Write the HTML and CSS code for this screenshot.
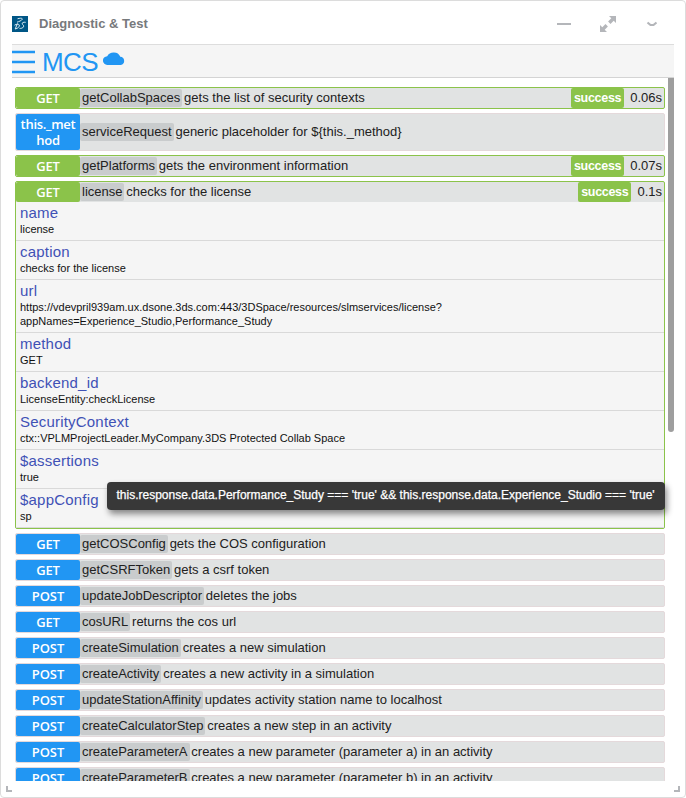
FILE: index.html
```html
<!DOCTYPE html>
<html lang="en">
<head>
<meta charset="utf-8">
<title>Diagnostic &amp; Test</title>
<link rel="stylesheet" href="styles.css">
</head>
<body>
<div class="widget">
  <header class="titlebar">
    <svg class="logo" viewBox="0 0 16 16"><rect width="16" height="16" fill="#005686"/><g fill="none" stroke="#dcebf3" stroke-width="1"><path d="M5.500 2.800C8 2 10.800 2 10.200 3.300C9.600 4.600 7 5.500 5 6.200"/><path d="M5.500 7.500L3.200 13C6 12.500 7.800 10.500 7.300 9C6.800 7.700 4.500 8 2.500 9.200"/><path d="M13.700 6.300C11.500 5.900 9.700 6.700 10.200 8C10.700 9 12.300 9.300 11.500 10.900C10.700 12.300 9 12.500 7.500 12.300"/></g></svg>
    <h1 class="title">Diagnostic &amp; Test</h1>
    <svg class="controls" viewBox="0 0 104 20"><g fill="#b4b6ba"><rect x="0" y="9" width="14" height="2"/><path d="M52 2h7v7l-2.300-2.300l-3.200 3.200l-2.400-2.400l3.200-3.200z"/><path d="M50 18h-7v-7l2.300 2.300l3.200-3.200l2.400 2.400l-3.200 3.200z"/></g><path d="M90.500 8.500L93.500 11H96.500L99.500 8.500" fill="none" stroke="#b4b6ba" stroke-width="2.200"/></svg>
  </header>
  <div class="toolbar">
    <svg class="burger" viewBox="0 0 23 22"><path d="M0 1h23M0 11h23M0 21h23" stroke="#2196f3" stroke-width="2.300"/></svg>
    <span class="brand">MCS</span>
    <svg class="cloud" viewBox="0 0 22 13"><path fill="#2196f3" d="M4.500 13A4.400 4.400 0 0 1 4.200 4.200A7.200 6.600 0 0 1 17.300 4.700A4.200 4.200 0 0 1 17.800 13z"/></svg>
  </div>
  <main class="list">
    <section class="row done"><div class="head"><b class="verb">GET</b><span class="text"><code>getCollabSpaces</code> gets the list of security contexts</span><b class="status">success</b><span class="time">0.06s</span></div></section>
    <section class="row"><div class="head tall"><b class="verb">this._met<br>hod</b><span class="text"><code>serviceRequest</code> generic placeholder for ${this._method}</span></div></section>
    <section class="row done"><div class="head"><b class="verb">GET</b><span class="text"><code>getPlatforms</code> gets the environment information</span><b class="status">success</b><span class="time">0.07s</span></div></section>
    <section class="row done">
      <div class="head"><b class="verb">GET</b><span class="text"><code>license</code> checks for the license</span><b class="status">success</b><span class="time">0.1s</span></div>
      <dl class="details">
        <div><dt>name</dt><dd>license</dd></div>
        <div><dt>caption</dt><dd>checks for the license</dd></div>
        <div><dt>url</dt><dd>https://vdevpril939am.ux.dsone.3ds.com:443/3DSpace/resources/slmservices/license?<br>appNames=Experience_Studio,Performance_Study</dd></div>
        <div><dt>method</dt><dd>GET</dd></div>
        <div><dt>backend_id</dt><dd>LicenseEntity:checkLicense</dd></div>
        <div><dt>SecurityContext</dt><dd>ctx::VPLMProjectLeader.MyCompany.3DS Protected Collab Space</dd></div>
        <div><dt>$assertions</dt><dd>true</dd></div>
        <div><dt>$appConfig</dt><dd>sp</dd></div>
      </dl>
    </section>
    <section class="row"><div class="head"><b class="verb">GET</b><span class="text"><code>getCOSConfig</code> gets the COS configuration</span></div></section>
    <section class="row"><div class="head"><b class="verb">GET</b><span class="text"><code>getCSRFToken</code> gets a csrf token</span></div></section>
    <section class="row"><div class="head"><b class="verb">POST</b><span class="text"><code>updateJobDescriptor</code> deletes the jobs</span></div></section>
    <section class="row"><div class="head"><b class="verb">GET</b><span class="text"><code>cosURL</code> returns the cos url</span></div></section>
    <section class="row"><div class="head"><b class="verb">POST</b><span class="text"><code>createSimulation</code> creates a new simulation</span></div></section>
    <section class="row"><div class="head"><b class="verb">POST</b><span class="text"><code>createActivity</code> creates a new activity in a simulation</span></div></section>
    <section class="row"><div class="head"><b class="verb">POST</b><span class="text"><code>updateStationAffinity</code> updates activity station name to localhost</span></div></section>
    <section class="row"><div class="head"><b class="verb">POST</b><span class="text"><code>createCalculatorStep</code> creates a new step in an activity</span></div></section>
    <section class="row"><div class="head"><b class="verb">POST</b><span class="text"><code>createParameterA</code> creates a new parameter (parameter a) in an activity</span></div></section>
    <section class="row"><div class="head"><b class="verb">POST</b><span class="text"><code>createParameterB</code> creates a new parameter (parameter b) in an activity</span></div></section>
    <div class="scrollbar"></div>
  </main>
  <i class="grip left"></i><i class="grip right"></i>
  <div class="tooltip">this.response.data.Performance_Study === 'true' &amp;&amp; this.response.data.Experience_Studio === 'true'</div>
</div>
</body>
</html>
```
FILE: styles.css
```css
* { box-sizing: border-box; }
body { margin: 0; background: #fff; font: 13px/20px "Liberation Sans", Arial, sans-serif; color: #212121; }
.widget { position: relative; width: 686px; height: 798px; border: 1px solid #dcdcdc; border-radius: 4px; padding: 0 11px; overflow: hidden; }
.titlebar { display: flex; align-items: center; height: 43px; padding-top: 2px; }
.logo { width: 16px; height: 16px; margin-right: 11px; }
.title { margin: 0; flex: 1; font-size: 13px; font-weight: bold; color: #77797c; }
.controls { width: 104px; height: 20px; margin-right: 13px; }
.toolbar { display: flex; align-items: center; height: 34px; background: #f5f5f5; border-top: 1px solid #ddd; border-bottom: 1px solid #d4d4d4; }
.burger { width: 23px; height: 22px; align-self: flex-start; margin-top: 6px; overflow: visible; }
.brand { font-size: 26px; letter-spacing: -.6px; color: #2196f3; margin: 1px 5px 0 7px; }
.cloud { width: 22px; height: 13px; margin-top: -5px; }
.list { position: relative; height: 703px; padding: 9px 9px 0 3px; overflow: hidden; }
.row { margin-bottom: 4px; border: 1px solid #e4d9db; border-radius: 2px; background: #e1e3e3; }
.done { border-color: #8bc34a; }
.head { display: flex; height: 20px; }
.tall { height: 36px; align-items: center; }
.verb { display: flex; align-items: center; justify-content: center; text-align: center; width: 64px; height: 100%; background: #2196f3; color: #fff; border-radius: 2px; font: 600 13px/16px "Open Sans", sans-serif; letter-spacing: -.1px; }
.tall .verb { letter-spacing: -.3px; padding-bottom: 1px; }
.done .verb { background: #8bc34a; }
.text { flex: 1; white-space: nowrap; }
code { display: inline-block; line-height: 18px; font-family: inherit; font-size: inherit; background: #c9cccd; border-radius: 2px; padding: 0 2px; margin-right: -1.800px; }
.status { background: #8bc34a; color: #fff; padding: 0 3px; border-radius: 2px; font-size: 12.500px; letter-spacing: -.3px; }
.time { padding: 0 2px 0 6px; }
.details { margin: 0; background: #f5f5f5; }
.details > div { border-bottom: 1px solid #d9d9d9; padding: 1px 4px 4px; }
dt { font-size: 15px; line-height: 20px; height: 19px; letter-spacing: .2px; color: #3f51b5; }
dd { margin: 0; font-size: 11px; line-height: 14px; color: #111; }
.scrollbar { position: absolute; right: 0; top: 0; width: 6px; height: 354px; background: #9e9e9e; border-radius: 0 0 3px 3px; }
.grip { position: absolute; bottom: 5px; width: 6px; height: 6px; border-bottom: 2px solid #b4b6ba; }
.left { left: 5px; border-left: 2px solid #b4b6ba; }
.right { right: 5px; border-right: 2px solid #b4b6ba; }
.tooltip { position: absolute; left: 106px; top: 481px; width: 558px; height: 28px; border-radius: 4px; background: #383838; color: #fff; font-size: 12px; line-height: 27px; padding-left: 9.500px; white-space: nowrap; box-shadow: 2px 4px 6px rgba(0,0,0,.45); -webkit-text-stroke: .25px #fff; }
```
